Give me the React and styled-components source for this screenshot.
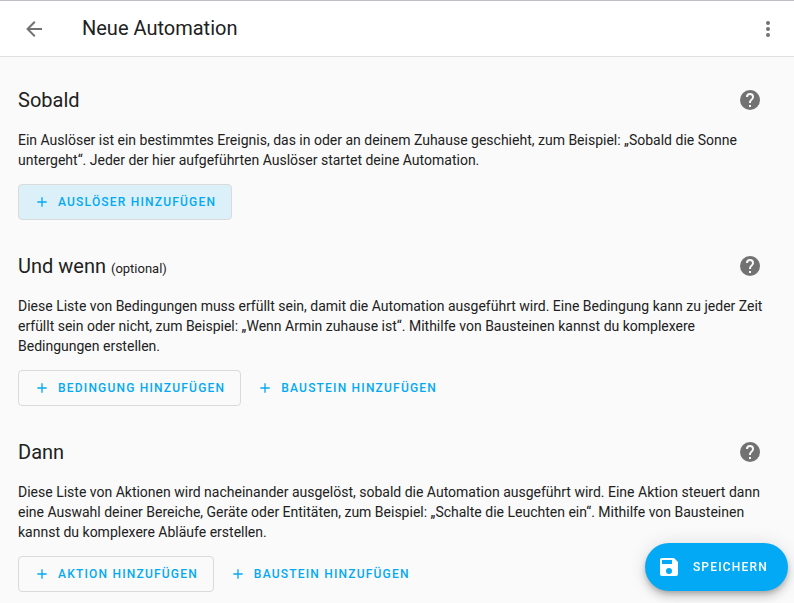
import React from "react";
import styled, { createGlobalStyle } from "styled-components";

const GlobalStyle = createGlobalStyle`
  * {
    box-sizing: border-box;
  }

  body {
    margin: 0;
    background-color: #fafafa;
    color: #212121;
    font-family: Roboto, "Noto Sans", sans-serif;
    font-size: 14px;
    line-height: 20px;
    -webkit-font-smoothing: antialiased;
  }
`;

const Header = styled.header`
  display: flex;
  align-items: center;
  height: 57px;
  padding: 0 2px 0 10px;
  background-color: #ffffff;
  border-top: 1px solid #bdbfc4;
  border-bottom: 1px solid #e0e0e0;
`;

const Title = styled.h1`
  flex: 1;
  margin: 0 0 0 24px;
  font-size: 20px;
  font-weight: 400;
  line-height: 25px;
`;

const IconButton = styled.button`
  display: flex;
  align-items: center;
  justify-content: center;
  width: 48px;
  height: 48px;
  padding: 0;
  border: 0;
  border-radius: 50%;
  background: none;
  color: #727272;
  cursor: pointer;
`;

const HelpLink = styled.a`
  display: flex;
  align-items: center;
  justify-content: center;
  width: 48px;
  height: 48px;
  color: #727272;
`;

const Svg = styled.svg`
  display: block;
  flex: none;
  width: ${(props) => props.$size}px;
  height: ${(props) => props.$size}px;
  fill: currentColor;
`;

const Content = styled.main`
  display: flex;
  flex-direction: column;
  gap: 22px;
  padding: 19px 20px 9px 18px;
`;

const SectionHeader = styled.div`
  display: flex;
  align-items: center;
  justify-content: space-between;
  margin-bottom: 6px;
`;

const Heading = styled.h2`
  margin: 0;
  font-size: 20px;
  font-weight: 400;
  line-height: 24px;
`;

const Optional = styled.small`
  font-size: 13px;
  line-height: 1;
`;

const Description = styled.p`
  margin: 0 8px 14px 0;
`;

const Actions = styled.div`
  display: flex;
  flex-wrap: wrap;
  gap: 8px;
`;

const Button = styled.button`
  display: flex;
  align-items: center;
  gap: 8px;
  height: 36px;
  padding: ${(props) => (props.$outlined ? "0 15px" : "0 8px")};
  border: ${(props) => (props.$outlined ? "1px solid #dadada" : "0")};
  border-radius: 4px;
  background-color: ${(props) => (props.$active ? "#dcf0f9" : "transparent")};
  color: #03a9f4;
  font-family: inherit;
  font-size: 12px;
  font-weight: 500;
  letter-spacing: 0.1em;
  text-transform: uppercase;
  cursor: pointer;
`;

const SaveButton = styled.button`
  position: fixed;
  right: 6px;
  bottom: 12px;
  display: flex;
  align-items: center;
  gap: 12px;
  height: 48px;
  padding: 0 20px 0 12px;
  border: 0;
  border-radius: 24px;
  background-color: #03a9f4;
  color: #ffffff;
  box-shadow: 0 3px 5px -1px rgba(0, 0, 0, 0.2),
    0 6px 10px 0 rgba(0, 0, 0, 0.14), 0 1px 18px 0 rgba(0, 0, 0, 0.12);
  font-family: inherit;
  font-size: 12px;
  font-weight: 500;
  letter-spacing: 0.1em;
  text-transform: uppercase;
  cursor: pointer;
`;

const icons = {
  back: "M20,11V13H8L13.5,18.5L12.08,19.92L4.16,12L12.08,4.08L13.5,5.5L8,11H20Z",
  more: "M12,16A2,2 0 0,1 14,18A2,2 0 0,1 12,20A2,2 0 0,1 10,18A2,2 0 0,1 12,16M12,10A2,2 0 0,1 14,12A2,2 0 0,1 12,14A2,2 0 0,1 10,12A2,2 0 0,1 12,10M12,4A2,2 0 0,1 14,6A2,2 0 0,1 12,8A2,2 0 0,1 10,6A2,2 0 0,1 12,4Z",
  help: "M15.07,11.25L14.17,12.17C13.45,12.89 13,13.5 13,15H11V14.5C11,13.39 11.45,12.39 12.17,11.67L13.41,10.41C13.78,10.05 14,9.55 14,9C14,7.89 13.1,7 12,7A2,2 0 0,0 10,9H8A4,4 0 0,1 12,5A4,4 0 0,1 16,9C16,9.88 15.64,10.67 15.07,11.25M13,19H11V17H13M12,2A10,10 0 0,0 2,12A10,10 0 0,0 12,22A10,10 0 0,0 22,12C22,6.47 17.5,2 12,2Z",
  plus: "M19,13H13V19H11V13H5V11H11V5H13V11H19V13Z",
  save: "M15,9H5V5H15M12,19A3,3 0 0,1 9,16A3,3 0 0,1 12,13A3,3 0 0,1 15,16A3,3 0 0,1 12,19M17,3H5C3.89,3 3,3.9 3,5V19A2,2 0 0,0 5,21H19A2,2 0 0,0 21,19V7L17,3Z",
};

const sections = [
  {
    id: "trigger",
    title: "Sobald",
    text: "Ein Auslöser ist ein bestimmtes Ereignis, das in oder an deinem Zuhause geschieht, zum Beispiel: „Sobald die Sonne untergeht“. Jeder der hier aufgeführten Auslöser startet deine Automation.",
    add: "Auslöser hinzufügen",
    active: true,
  },
  {
    id: "condition",
    title: "Und wenn",
    optional: true,
    text: "Diese Liste von Bedingungen muss erfüllt sein, damit die Automation ausgeführt wird. Eine Bedingung kann zu jeder Zeit erfüllt sein oder nicht, zum Beispiel: „Wenn Armin zuhause ist“. Mithilfe von Bausteinen kannst du komplexere Bedingungen erstellen.",
    add: "Bedingung hinzufügen",
    block: "Baustein hinzufügen",
  },
  {
    id: "action",
    title: "Dann",
    text: "Diese Liste von Aktionen wird nacheinander ausgelöst, sobald die Automation ausgeführt wird. Eine Aktion steuert dann eine Auswahl deiner Bereiche, Geräte oder Entitäten, zum Beispiel: „Schalte die Leuchten ein“. Mithilfe von Bausteinen kannst du komplexere Abläufe erstellen.",
    add: "Aktion hinzufügen",
    block: "Baustein hinzufügen",
  },
];

function Icon({ name, size = 24 }) {
  return (
    <Svg viewBox="0 0 24 24" $size={size} aria-hidden="true">
      <path d={icons[name]} />
    </Svg>
  );
}

function Section({ section }) {
  return (
    <section aria-labelledby={section.id}>
      <SectionHeader>
        <Heading id={section.id}>
          {section.title}
          {section.optional && (
            <>
              {" "}
              <Optional>(optional)</Optional>
            </>
          )}
        </Heading>
        <HelpLink href="#" aria-label="Hilfe">
          <Icon name="help" />
        </HelpLink>
      </SectionHeader>
      <Description>{section.text}</Description>
      <Actions>
        <Button type="button" $outlined $active={section.active}>
          <Icon name="plus" size={16} />
          {section.add}
        </Button>
        {section.block && (
          <Button type="button">
            <Icon name="plus" size={16} />
            {section.block}
          </Button>
        )}
      </Actions>
    </section>
  );
}

function App() {
  return (
    <>
      <GlobalStyle />
      <Header>
        <IconButton type="button" aria-label="Zurück">
          <Icon name="back" />
        </IconButton>
        <Title>Neue Automation</Title>
        <IconButton type="button" aria-label="Menü">
          <Icon name="more" />
        </IconButton>
      </Header>
      <Content>
        {sections.map((section) => (
          <Section key={section.id} section={section} />
        ))}
      </Content>
      <SaveButton type="button">
        <Icon name="save" />
        Speichern
      </SaveButton>
    </>
  );
}

export default App;
